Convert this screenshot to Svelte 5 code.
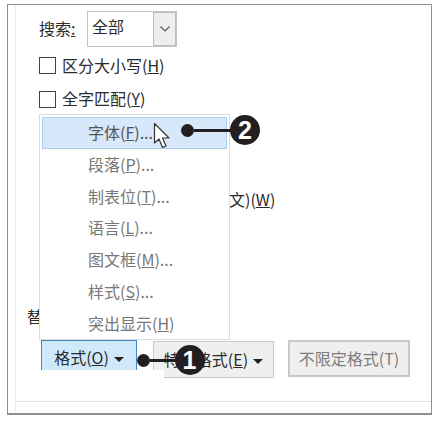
<script>
    const checks = [
        { label: "区分大小写", key: "H" },
        { label: "全字匹配", key: "Y" },
    ];

    const menu = [
        { label: "字体", key: "F", dots: "..." },
        { label: "段落", key: "P", dots: "..." },
        { label: "制表位", key: "T", dots: "..." },
        { label: "语言", key: "L", dots: "..." },
        { label: "图文框", key: "M", dots: "..." },
        { label: "样式", key: "S", dots: "..." },
        { label: "突出显示", key: "H", dots: "" },
    ];
</script>

<div class="dialog">
    <div class="search">
        <span class="label">搜索<u>:</u></span>
        <div class="select">
            <span class="value">全部</span>
            <span class="arrow">
                <svg width="12" height="8" viewBox="0 0 12 8">
                    <path d="M1.5 1.5 L6 6 L10.5 1.5" fill="none" stroke="#555" stroke-width="1.2" />
                </svg>
            </span>
        </div>
    </div>

    <div class="checks">
        {#each checks as c}
            <div class="check">
                <span class="box"></span>
                <span class="text">{c.label}(<u>{c.key}</u>)</span>
            </div>
        {/each}
        <!-- rest of this row sits behind the menu -->
        <div class="check tail">文)(<u>W</u>)</div>
    </div>

    <div class="replace">替</div>

    <div class="buttons">
        <button class="open">格式(<u>O</u>)<i class="caret"></i></button>
        <button class="special">特殊格式(<u>E</u>)<i class="caret"></i></button>
        <button class="clear">不限定格式(T)</button>
    </div>

    <div class="rule"></div>

    <ul class="menu">
        {#each menu as m, i}
            <li class:active={i === 0}>{m.label}(<u>{m.key}</u>){m.dots}</li>
        {/each}
    </ul>

    <!-- the buttons are cut off here in the original capture -->
    <div class="mask"></div>

    <svg class="cursor" width="20" height="28" viewBox="0 0 20 28">
        <path
            d="M1.5 1.5 V21 L6 17 L9.5 25.5 L13 24 L9.5 16 H16 Z"
            fill="#fff"
            stroke="#333"
            stroke-width="1.2"
            stroke-linejoin="round"
        />
    </svg>

    <div class="callout two">
        <span class="dot"></span>
        <span class="line"></span>
        <span class="num">2</span>
    </div>
    <div class="callout one">
        <span class="dot"></span>
        <span class="line"></span>
        <span class="num">1</span>
    </div>
</div>

<style>
    :global(body) {
        background: #fff;
    }

    .dialog {
        position: relative;
        box-sizing: border-box;
        width: 425px;
        height: 411px;
        margin: 4px 0 0 7px;
        border: 1px solid #8f8f8f;
        border-bottom-width: 2px;
        padding: 6px 0 0 31px;
        font-family: "Noto Sans CJK SC", "Liberation Sans", sans-serif;
        font-size: 16px;
        color: #2b2b2b;
    }

    .dialog::before {
        content: "";
        position: absolute;
        left: 7px;
        top: 0;
        bottom: 0;
        width: 1px;
        background: #ececec;
    }

    .search {
        display: flex;
        align-items: center;
        gap: 5px;
    }

    .label {
        width: 43px;
        padding-bottom: 3px;
    }

    .select {
        box-sizing: border-box;
        display: flex;
        width: 90px;
        height: 36px;
        border: 1px solid #c4c4c4;
    }

    .value {
        flex: 1;
        padding-left: 4px;
        line-height: 29px;
    }

    .arrow {
        display: flex;
        align-items: center;
        justify-content: center;
        width: 21px;
        background: #eee;
        border: 1px solid #bdbdbd;
    }

    .checks {
        display: flex;
        flex-direction: column;
        gap: 10px;
        margin-top: 7px;
    }

    .check {
        display: flex;
        align-items: center;
        gap: 6px;
        height: 23.5px;
    }

    .text {
        padding-bottom: 2px;
    }

    .check.tail {
        display: block;
        margin: 67px 0 0 190px;
        line-height: 22px;
    }

    .box {
        box-sizing: border-box;
        width: 17px;
        height: 17px;
        border: 1.5px solid #444;
    }

    .replace {
        margin: 93px 0 0 -12px;
        height: 22px;
        line-height: 22px;
    }

    .buttons {
        display: flex;
        align-items: flex-start;
        margin: 13px 0 0 2px;
    }

    button {
        box-sizing: border-box;
        height: 37px;
        padding: 0;
        font: inherit;
        color: inherit;
        background: #efefef;
        border: 1px solid #c8c8c8;
    }

    .open {
        width: 96px;
        padding-bottom: 2px;
        background: #cfe9fb;
        border: 1px solid #3f86c4;
    }

    .special {
        width: 121px;
        margin: 1px 0 0 16px;
    }

    .clear {
        width: 122px;
        margin-left: 14px;
        color: #7d7d7d;
        border-width: 2px;
    }

    .caret {
        display: inline-block;
        margin-left: 5px;
        vertical-align: 2px;
        border: 5px solid transparent;
        border-top: 5px solid #222;
        border-bottom: 0;
    }

    .rule {
        position: absolute;
        left: 8px;
        right: 0;
        bottom: 11px;
        height: 1px;
        background: #e2e2e2;
    }

    .menu {
        position: absolute;
        left: 31px;
        top: 109px;
        box-sizing: border-box;
        width: 191px;
        height: 226px;
        margin: 0;
        padding: 2px;
        list-style: none;
        background: #fff;
        border: 1px solid #dcdcdc;
        color: #777;
    }

    .menu li {
        box-sizing: border-box;
        height: 31.8px;
        padding-left: 45px;
        line-height: 28px;
        border: 1px solid transparent;
    }

    .menu li.active {
        background: #d6e8fa;
        border-color: #a9cdf0;
        color: #555;
    }

    .mask {
        position: absolute;
        left: 32px;
        top: 365px;
        width: 124px;
        height: 10px;
        background: #fff;
    }

    .cursor {
        position: absolute;
        left: 145px;
        top: 117px;
    }

    .callout {
        position: absolute;
        display: flex;
        align-items: center;
    }

    .callout.two {
        left: 173px;
        top: 110px;
    }

    .callout.one {
        left: 129px;
        top: 340px;
    }

    .dot {
        width: 13px;
        height: 13px;
        border-radius: 50%;
        background: #231f20;
    }

    .line {
        height: 3px;
        background: #231f20;
    }

    .two .line {
        width: 38px;
    }

    .one .line {
        width: 26.5px;
    }

    .num {
        display: flex;
        align-items: center;
        justify-content: center;
        width: 30px;
        height: 30px;
        margin-left: -2px;
        border-radius: 50%;
        background: #231f20;
        color: #fff;
        font-family: "Liberation Sans", sans-serif;
        font-size: 25px;
        font-weight: 700;
    }
</style>
